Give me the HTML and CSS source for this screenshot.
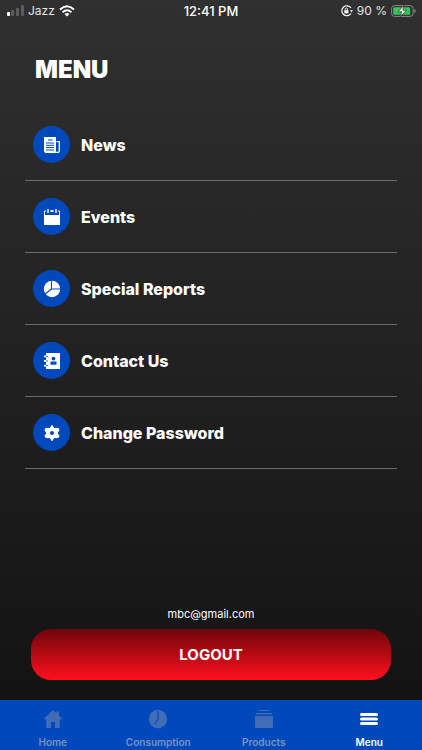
FILE: index.html
```html
<!DOCTYPE html>
<html lang="en">
<head>
<meta charset="utf-8">
<meta name="viewport" content="width=device-width, initial-scale=1">
<title>Menu</title>
<link rel="stylesheet" href="styles.css">
</head>
<body>
<div class="screen">
  <header class="status">
    <div class="status-side">
      <svg width="18" height="12" viewBox="0 0 18 12" fill="#5c5c5c"><rect x="1" y="7" width="3" height="4" rx="1" fill="#fff"/><rect x="5" y="5" width="3" height="6" rx="1"/><rect x="10" y="3" width="3" height="8" rx="1"/><rect x="15" y="0" width="3" height="11" rx="1"/></svg>
      <span class="carrier">Jazz</span>
      <svg width="16" height="12" viewBox="0 0 16 12" fill="none" stroke="#fff" stroke-width="2"><path d="M1 4.600Q8-2 15 4.600M3.500 7.300Q8 3.300 12.500 7.300"/><path d="M5.500 9Q8 7 10.500 9L8 11.600Z" fill="#fff" stroke="none"/></svg>
    </div>
    <span class="time">12:41 PM</span>
    <div class="status-side status-end">
      <svg width="12" height="12" viewBox="0 0 12 12" fill="none" stroke="#fff" stroke-width="1.200"><path d="M10 3A5 5 0 1 0 10 8.500"/><path d="M9 5.200h3L10.500 7.400Z" fill="#fff" stroke="none"/><rect x="3.400" y="5.200" width="4" height="3.200" fill="#fff" stroke="none"/><path d="M4.200 5.500V4.200a1.200 1.200 0 0 1 2.400 0v1.300" stroke-width=".9"/></svg>
      <span class="percent">90 %</span>
      <svg width="25" height="12" viewBox="0 0 25 12"><rect x=".6" y=".6" width="21.500" height="10.800" rx="3" fill="none" stroke="#888"/><path d="M23.300 4v4q1.500-.6 1.500-2t-1.500-2" fill="#888"/><rect x="2.200" y="2.200" width="17" height="7.600" rx="1.500" fill="#35c759"/><path d="M12.800.5L7 6.700h3.600L9.500 11.500l6-6.300h-3.600Z" fill="#fff" stroke="#2d2d2d" stroke-width=".7"/></svg>
    </div>
  </header>
  <main class="main">
    <h1 class="title">MENU</h1>
    <nav class="list" aria-label="Sections">
      <a class="row" href="#news"><span class="disc"><svg width="18" height="18" viewBox="0 0 18 18"><path d="M1 1h12v16H3a2 2 0 0 1-2-2Z" fill="#fff"/><path d="M13.500 5.600H16.300V15q0 1.300-1.300 1.300H12" fill="none" stroke="#fff" stroke-width="1.300"/><path d="M5 4h4.500M3 7h8M3 9.300h8M3 11.600h8M3 14h8" stroke="#0049bd" stroke-width="1"/></svg></span>News</a>
      <a class="row" href="#events"><span class="disc"><svg width="18" height="18" viewBox="0 0 18 18"><path d="M1 7h16v10H1Z" fill="#fff"/><path d="M1.500 7V3H3M7 3h4M15 3h1.500v4" fill="none" stroke="#fff"/><path d="M5 1v4M13 1v4" stroke="#fff" stroke-width="1.400"/><path d="M8 3h2" stroke="#fff" stroke-width="1.600"/></svg></span>Events</a>
      <a class="row" href="#reports"><span class="disc"><svg width="18" height="18" viewBox="0 0 18 18"><circle cx="9" cy="9" r="8.200" fill="#fff"/><path d="M8.500 0v9H18M8.500 9L1.500 14.500" fill="none" stroke="#0049bd" stroke-width="1.100"/></svg></span>Special Reports</a>
      <a class="row" href="#contact"><span class="disc"><svg width="18" height="18" viewBox="0 0 18 18"><path d="M3 1h14v16H3v-2.500H1v-1.800h2V10H1V8h2V5.300H1V3.500h2Z" fill="#fff"/><path d="M3 4.400h2M3 9h2M3 13.600h2" stroke="#0049bd" stroke-width=".8"/><circle cx="10.500" cy="6.600" r="1.900" fill="#0049bd"/><path d="M7.500 12.700V9.500h6v3.200Z" fill="#0049bd"/></svg></span>Contact Us</a>
      <a class="row" href="#password"><span class="disc"><svg width="18" height="18" viewBox="0 0 18 18"><path fill="#fff" stroke="#fff" stroke-linejoin="round" fill-rule="evenodd" d="M9 1.300l2 3.200 4.200-.2.900 1.700L14.200 9l1.900 3-1 1.700-4.100-.2-2 3.200-2-3.200-4.100.2-1-1.700L3.800 9 1.900 6l.9-1.700 4.200.2ZM9 6.500a2.500 2.500 0 1 0 0 5 2.500 2.500 0 0 0 0-5Z"/></svg></span>Change Password</a>
    </nav>
    <div class="account">
      <p class="email">mbc@gmail.com</p>
      <button class="logout" type="button">LOGOUT</button>
    </div>
  </main>
  <nav class="tabs" aria-label="Main">
    <a class="tab" href="#home"><svg width="20" height="20" viewBox="0 0 20 20" fill="currentColor"><path d="M10 1l3.500 3.300V2.500H16v4.200l3.500 3.500h-2.800V19H12v-6H8v6H3.300v-8.800H.5Z"/></svg><span class="label">Home</span></a>
    <a class="tab" href="#consumption"><svg width="20" height="20" viewBox="0 0 20 20"><circle cx="10" cy="10" r="9.200" fill="currentColor"/><path d="M10 2v8.500L6.500 15" fill="none" stroke="#0049bd" stroke-width="1.200"/></svg><span class="label">Consumption</span></a>
    <a class="tab" href="#products"><svg width="20" height="20" viewBox="0 0 20 20" fill="currentColor"><path d="M4 1h12v1H4ZM2 4h16v1.400H2Z"/><rect x="1" y="7" width="18" height="12" rx="1"/></svg><span class="label">Products</span></a>
    <a class="tab active" href="#menu" aria-current="page"><svg width="20" height="20" viewBox="0 0 20 20" fill="currentColor"><rect x="1" y="4" width="18" height="3" rx="1.500"/><rect x="1" y="8.500" width="18" height="3" rx="1.500"/><rect x="1" y="13" width="18" height="3" rx="1.500"/></svg><span class="label">Menu</span></a>
  </nav>
</div>
</body>
</html>
```
FILE: styles.css
```css
* { box-sizing: border-box; }

body {
  margin: 0;
  font-family: Inter, "Liberation Sans", sans-serif;
  color: #fff;
  background: #111;
}

a { color: inherit; text-decoration: none; }
svg { display: block; flex: none; }

.screen {
  min-height: 100vh;
  display: flex;
  flex-direction: column;
  background: linear-gradient(#303030, #111);
}

.status {
  height: 22px;
  padding: 0 6px;
  display: flex;
  align-items: center;
  font-size: 12px;
  line-height: 16px;
}

.status-side {
  flex: 1;
  display: flex;
  align-items: center;
  gap: 4px;
}

.status-end { justify-content: flex-end; }
.carrier, .percent { color: #e4e4e4; }
.time { font-size: 13px; font-weight: 500; }

.main {
  flex: 1;
  display: flex;
  flex-direction: column;
  padding: 0 25px 20px;
}

.title {
  margin: 32px 10px 23px;
  font-size: 24px;
  line-height: 32px;
  font-weight: 900;
}

.row {
  height: 72px;
  padding: 0 8px;
  display: flex;
  align-items: center;
  gap: 11px;
  border-bottom: 1px solid #6a6a6a;
  font-size: 16px;
  line-height: 24px;
  font-weight: 800;
}

.disc {
  width: 37px;
  height: 37px;
  border-radius: 50%;
  display: grid;
  place-items: center;
  background: #0049bd;
}

.account {
  margin-top: auto;
  padding: 0 6px;
  text-align: center;
}

.email {
  margin: 0 0 7px;
  font-size: 11px;
  line-height: 16px;
}

.logout {
  display: block;
  width: 100%;
  height: 51px;
  border: 0;
  border-radius: 20px;
  background: linear-gradient(#70040b, #ff101e);
  color: #fff;
  font: 700 15px/20px Inter, "Liberation Sans", sans-serif;
}

.tabs {
  display: flex;
  height: 50px;
  background: #0049bd;
}

.tab {
  flex: 1;
  padding-top: 9px;
  display: flex;
  flex-direction: column;
  align-items: center;
  gap: 6px;
  color: #426cb5;
}

.label {
  font-size: 10px;
  line-height: 14px;
  font-weight: 600;
  color: #7a92bf;
}

.active, .active .label { color: #fff; }
```
